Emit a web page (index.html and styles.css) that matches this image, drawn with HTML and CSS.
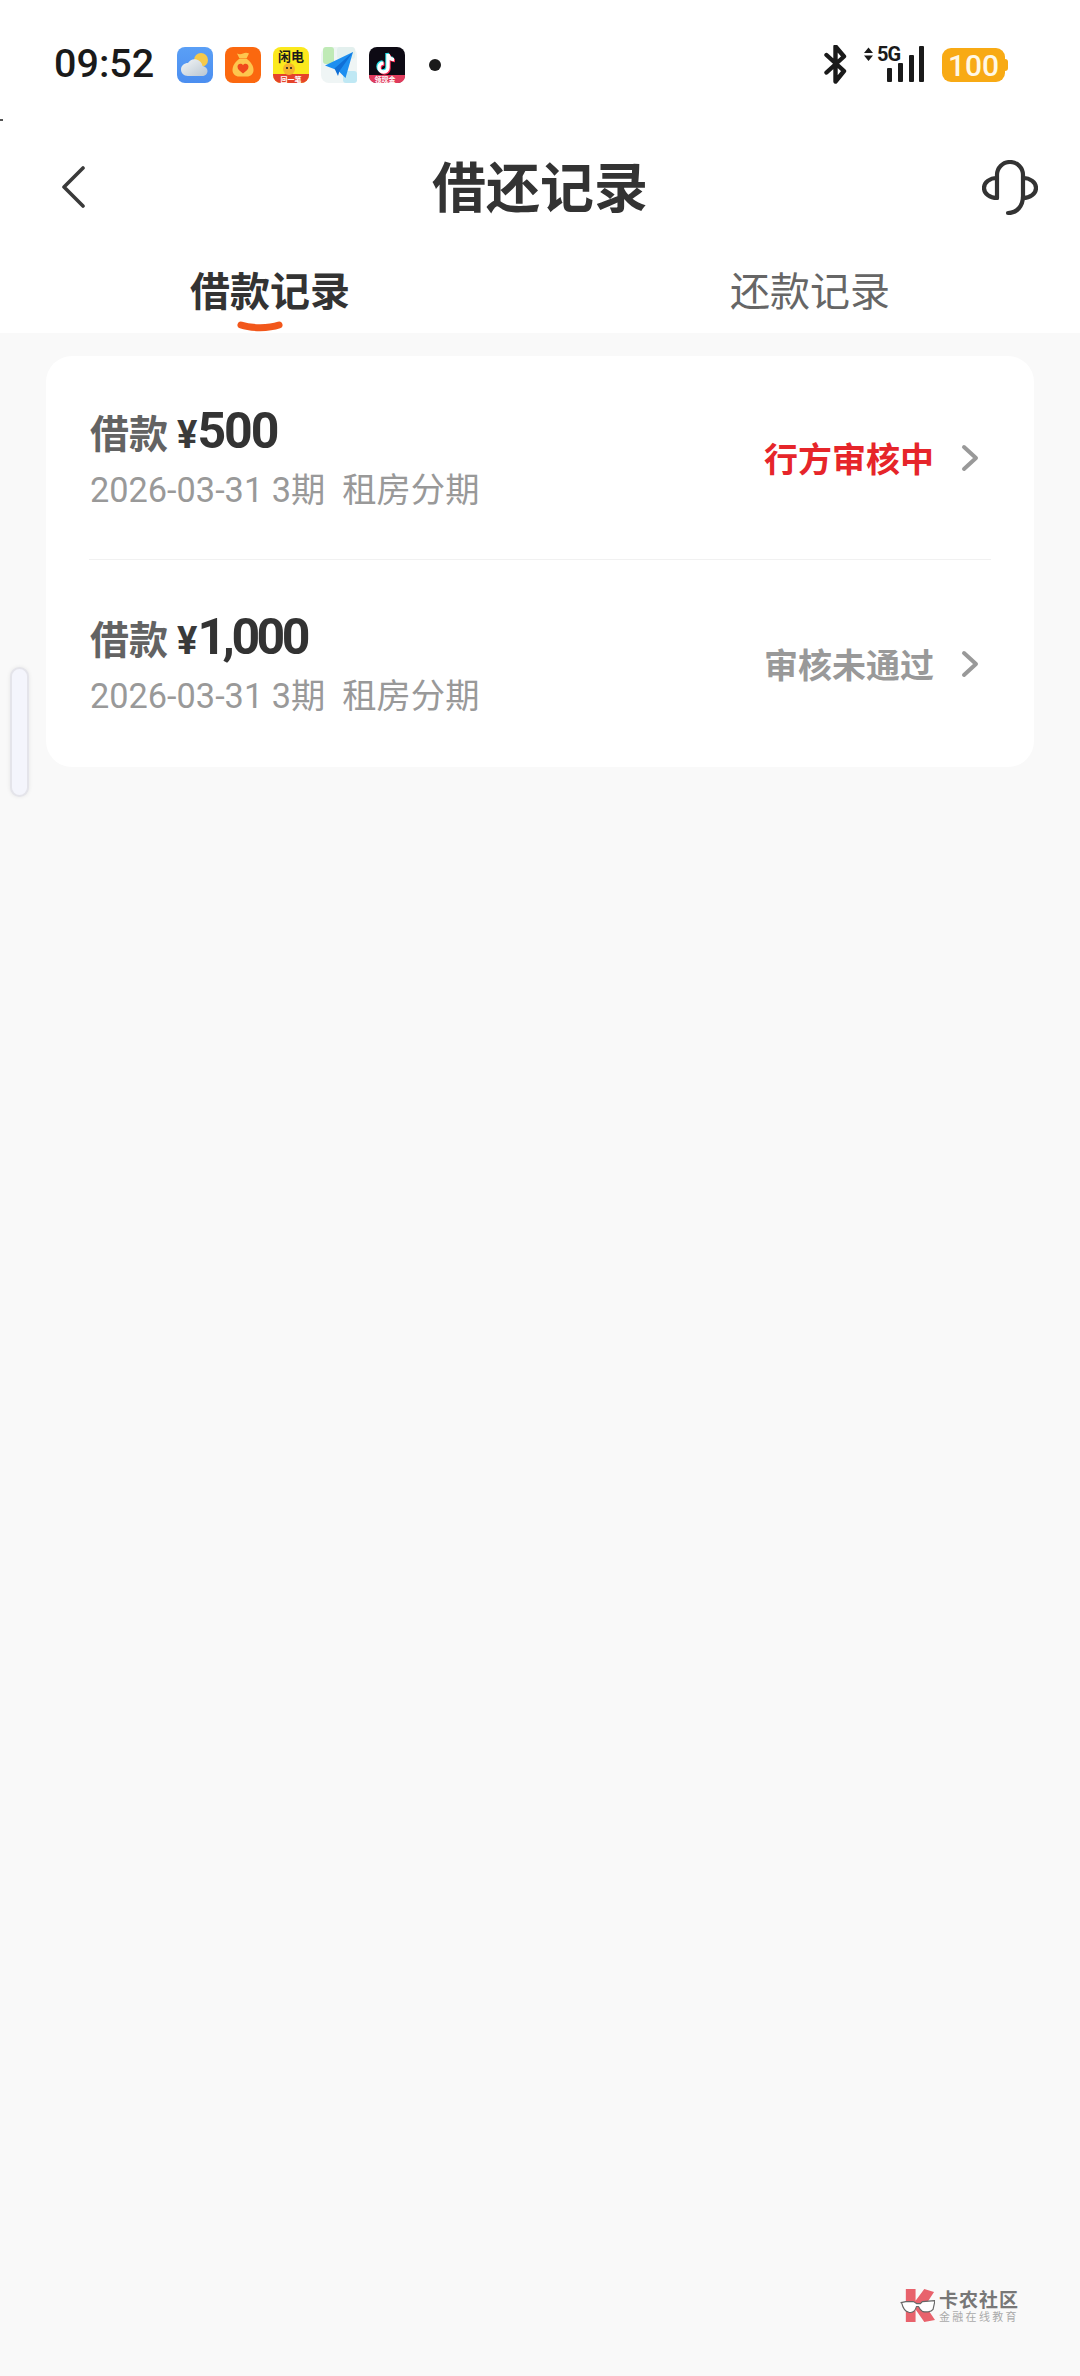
FILE: index.html
```html
<!DOCTYPE html>
<html lang="zh-CN">
<head>
  <meta charset="UTF-8">
  <meta name="viewport" content="width=device-width, initial-scale=1.0">
  <title>借还记录</title>
  <link rel="stylesheet" href="styles.css">
</head>
<body>
  <div class="header">
    <!-- 状态栏 -->
    <div class="status-bar">
      <span class="time">09:52</span>
      <div class="app-icons">
        <svg class="app-icon" viewBox="0 0 36 36">
          <defs>
            <linearGradient id="skyGrad" x1="0" y1="0" x2="0" y2="1"><stop offset="0" stop-color="#5a9ff6"/><stop offset="1" stop-color="#4b8ef0"/></linearGradient>
            <linearGradient id="cloudGrad" x1="0" y1="0" x2="1" y2="1"><stop offset="0" stop-color="#f4f6f6"/><stop offset="1" stop-color="#b9c6d2"/></linearGradient>
          </defs>
          <rect width="36" height="36" rx="8" fill="url(#skyGrad)"/>
          <circle cx="24" cy="13" r="7" fill="#f5c94a"/>
          <path d="M11 29c-4.500 0-7-3-7-6.500 0-4 3.500-6.500 7-6.500 2-3.500 5.500-4.500 8.500-3.500 3.500 1 5.500 3.500 6 6.500 3 .5 5 2.500 5 5 0 3-2.500 5-5.500 5z" fill="url(#cloudGrad)"/>
        </svg>
        <svg class="app-icon" viewBox="0 0 36 36">
          <rect width="36" height="36" rx="8" fill="#fb680f"/>
          <path d="M12 6.500c2 1 4 1 6 0s4-1 6 0l-2.500 5h-7z" fill="#fdc64e"/>
          <path d="M14 12h8c4 3 6.500 7 6.500 11 0 4-3 6.500-6.500 6.500h-8C10.500 29.500 7.500 27 7.500 23c0-4 2.500-8 6.500-11z" fill="#fdc64e"/>
          <path d="M18 26.500c-3-2.200-5.500-4-5.500-6.700 0-3.300 4-4 5.500-1.500 1.500-2.500 5.500-1.800 5.500 1.500 0 2.700-2.500 4.500-5.500 6.700z" fill="#f0491c"/>
        </svg>
        <svg class="app-icon" viewBox="0 0 36 36">
          <rect width="36" height="36" rx="8" fill="#fbe91d"/>
          <path d="M0 27h36v1a8 8 0 0 1-8 8H8a8 8 0 0 1-8-8z" fill="#e5432a"/>
          <circle cx="16" cy="22" r="6" fill="#f6b52e"/>
          <text class="app-text app-text-dark" x="18" y="14">闲电</text>
          <circle cx="14" cy="21" r="1.100" fill="#222"/>
          <circle cx="18" cy="21" r="1.100" fill="#222"/>
          <text class="app-text app-text-light" x="18" y="34.500">回一笔</text>
        </svg>
        <svg class="app-icon" viewBox="0 0 36 36">
          <rect width="36" height="36" rx="8" fill="#eff5f5"/>
          <rect x="2" y="0" width="11" height="17" rx="3" fill="#bfeab6"/>
          <rect x="16" y="0" width="18" height="12" rx="3" fill="#e3f0ee"/>
          <rect x="22" y="24" width="14" height="12" rx="3" fill="#bfe8f4"/>
          <path d="M4 18.500 32 5 24.500 31 17 23.500z" fill="#1d8ff0"/>
          <path d="M32 5 13.500 21.500 17 29 18.500 24z" fill="#0f6fd6"/>
        </svg>
        <svg class="app-icon" viewBox="0 0 36 36">
          <rect width="36" height="36" rx="8" fill="#0d0a14"/>
          <path d="M0 28h36v1a7 7 0 0 1-7 7H7a7 7 0 0 1-7-7z" fill="#e13a5c"/>
          <path class="note note-cyan" d="M18 6v13.500a4.500 4.500 0 1 1-4.500-4.500M18 6c.5 3.500 3 5.500 6 5.500"/>
          <path class="note note-red" d="M20 8v13.500a4.500 4.500 0 1 1-4.500-4.500M20 8c.5 3.500 3 5.500 6 5.500"/>
          <path class="note note-white" d="M19 7v13.500a4.500 4.500 0 1 1-4.500-4.500M19 7c.5 3.500 3 5.500 6 5.500"/>
          <text class="app-text app-text-light" x="16" y="34.500">领现金</text>
        </svg>
      </div>
      <span class="notice-dot"></span>
      <div class="status-right">
        <svg class="bluetooth" viewBox="0 0 24 40">
          <path d="M2.500 10 20 26 11.500 36.500V1.500L20 11.500 2.500 27.500" fill="none" stroke="#1a1a1a" stroke-width="4.400" stroke-linecap="round" stroke-linejoin="round"/>
        </svg>
        <svg class="signal" viewBox="0 -6 62 50">
          <path d="M1 7 5.500 1.500 10 7zM1 9.500 5.500 15 10 9.500z" fill="#1a1a1a"/>
          <text class="net-type" x="14" y="15">5G</text>
          <rect x="24" y="22" width="5" height="14" rx="1" fill="#1a1a1a"/>
          <rect x="35" y="17" width="5" height="19" rx="1" fill="#1a1a1a"/>
          <rect x="46" y="9" width="5" height="27" rx="1" fill="#1a1a1a"/>
          <rect x="56" y="0" width="5" height="36" rx="1" fill="#1a1a1a"/>
        </svg>
        <div class="battery"><span class="battery-level">100</span></div>
      </div>
    </div>

    <!-- 标题栏 -->
    <div class="nav-bar">
      <svg class="back-icon" viewBox="0 0 24 42">
        <path d="M22 2 3 21 22 40" fill="none" stroke="#3a3a3a" stroke-width="3.600" stroke-linecap="round" stroke-linejoin="round"/>
      </svg>
      <h1 class="page-title">借还记录</h1>
      <svg class="service-icon" viewBox="0 0 56 56">
        <path d="M15 38V15a13 13 0 0 1 26 0V36c0 10-6 17-15 17" fill="none" stroke="#333" stroke-width="4.200" stroke-linecap="round"/>
        <path d="M15 18a13 10 0 0 0 0 20M41 18a13 10 0 0 1 0 20" fill="none" stroke="#333" stroke-width="4.200" stroke-linecap="round"/>
      </svg>
    </div>

    <div class="tabs">
      <div class="tab tab-active">
        <span>借款记录</span>
        <svg class="tab-mark" viewBox="0 0 46 12">
          <path d="M4 4C14 7.500 32 7.500 42 4" fill="none" stroke="#f2571b" stroke-width="7" stroke-linecap="round"/>
        </svg>
      </div>
      <div class="tab"><span>还款记录</span></div>
    </div>
  </div>

  <div class="card">
    <div class="record">
      <div class="record-info">
        <div class="record-amount"><span class="amount-label">借款</span><span class="amount-sign">¥</span><span class="amount-value">500</span></div>
        <div class="record-meta">2026-03-31 3期&nbsp;&nbsp;租房分期</div>
      </div>
      <div class="record-status status-pending">行方审核中</div>
      <svg class="record-arrow" viewBox="0 0 18 28"><path d="M3 3 15 14 3 25" fill="none" stroke="#999" stroke-width="4" stroke-linecap="round" stroke-linejoin="round"/></svg>
    </div>
    <div class="record">
      <div class="record-info">
        <div class="record-amount"><span class="amount-label">借款</span><span class="amount-sign">¥</span><span class="amount-value amount-long">1,000</span></div>
        <div class="record-meta">2026-03-31 3期&nbsp;&nbsp;租房分期</div>
      </div>
      <div class="record-status">审核未通过</div>
      <svg class="record-arrow" viewBox="0 0 18 28"><path d="M3 3 15 14 3 25" fill="none" stroke="#999" stroke-width="4" stroke-linecap="round" stroke-linejoin="round"/></svg>
    </div>
  </div>

  <!-- 侧边悬浮条 -->
  <div class="side-handle"></div>
  <div class="corner-speck"></div>

  <!-- 水印 -->
  <div class="watermark">
    <svg class="watermark-logo" viewBox="0 0 36 36">
      <path d="M6 1h10v12L25 1l10 3-9 14 10 15-11 2-9-13v13H6z" fill="#e8626c"/>
      <path d="M1 15 6 14h8l3 2h4l2-2 13-1-2 9c-2 3-8 3-11 2-2-1-3-3-4-5h-2c-1 4-4 7-8 6-3-1-6-4-7-9z" fill="#fff" stroke="#666" stroke-width="1.200" stroke-linejoin="round"/>
    </svg>
    <div class="watermark-text">
      <div class="watermark-name">卡农社区</div>
      <div class="watermark-sub">金融在线教育</div>
    </div>
  </div>
</body>
</html>
```

FILE: styles.css
```css
body {
  margin: 0;
  height: 2376px;
  overflow: hidden;
  position: relative;
  background-color: #f9f9f9;
  font-family: Roboto, "Noto Sans CJK SC", sans-serif;
  color: #333;
}
.header {
  background-color: #fff;
}

/* status bar */
.status-bar {
  display: flex;
  align-items: center;
  height: 130px;
  padding: 0 75px 0 54px;
}
.time {
  font-size: 39.5px;
  font-weight: 500;
  color: #1a1a1a;
  width: 123px;
  margin-bottom: 4px;
}
.app-icons {
  display: flex;
  gap: 12px;
}
.app-icon {
  width: 36px;
  height: 36px;
  display: block;
}
.app-text {
  font-family: "Noto Sans CJK SC", sans-serif;
  font-weight: 700;
  text-anchor: middle;
}
.app-text-dark {
  font-size: 13px;
  fill: #1a1a1a;
}
.app-text-light {
  font-size: 7px;
  fill: #fff;
}
.note {
  fill: none;
  stroke-width: 3.4;
}
.note-cyan {
  stroke: #25e6ee;
}
.note-red {
  stroke: #fb2c55;
}
.note-white {
  stroke: #fff;
}
.notice-dot {
  width: 12px;
  height: 12px;
  border-radius: 50%;
  background-color: #1a1a1a;
  margin-left: 24px;
}
.status-right {
  margin-left: auto;
  display: flex;
  align-items: center;
}
.bluetooth {
  width: 24px;
  height: 40px;
  display: block;
}
.signal {
  width: 62px;
  height: 50px;
  display: block;
  margin-left: 15px;
}
.net-type {
  font-size: 20px;
  font-weight: 700;
  fill: #1a1a1a;
  letter-spacing: -1px;
}
.battery {
  position: relative;
  width: 63px;
  height: 34px;
  margin-left: 17px;
  border-radius: 9px;
  background-color: #f8aa14;
  display: flex;
  align-items: center;
  justify-content: center;
}
.battery::after {
  content: "";
  position: absolute;
  right: -3px;
  top: 11px;
  width: 3px;
  height: 12px;
  border-radius: 0 3px 3px 0;
  background-color: #f8aa14;
}
.battery-level {
  font-size: 30px;
  font-weight: 500;
  color: #fff8e6;
}

/* title */
.nav-bar {
  display: grid;
  grid-template-columns: 1fr auto 1fr;
  align-items: center;
  height: 114px;
  padding: 0 42px;
}
.back-icon {
  width: 24px;
  height: 42px;
  display: block;
  margin-left: 19px;
}
.page-title {
  margin: 0 0 4px;
  font-family: "Noto Sans CJK SC", sans-serif;
  font-size: 54px;
  font-weight: 700;
  color: #333;
  line-height: 1;
}
.service-icon {
  width: 56px;
  height: 56px;
  display: block;
  justify-self: end;
  margin-top: 2px;
}

/* tabs */
.tabs {
  display: flex;
  height: 89px;
}
.tab {
  flex: 1;
  display: flex;
  flex-direction: column;
  align-items: center;
  padding-top: 18px;
  font-family: "Noto Sans CJK SC", sans-serif;
  font-size: 40px;
  line-height: 54px;
  color: #666;
}
.tab-active {
  font-weight: 700;
  color: #333;
}
.tab-mark {
  width: 46px;
  height: 12px;
  display: block;
  margin: 5px 20px 0 0;
}

/* list */
.card {
  margin: 23px 46px 0;
  padding: 0 43px;
  background-color: #fff;
  border-radius: 26px;
}
.record {
  display: flex;
  align-items: center;
  height: 207px;
  box-sizing: border-box;
  padding: 0 12px 0 1px;
}
.record:first-child {
  height: 204px;
  border-bottom: 1px solid #f1f1f1;
}
.record-info {
  flex: 1;
  padding-bottom: 2px;
}
.record-amount {
  display: flex;
  align-items: baseline;
  line-height: 60px;
}
.amount-label {
  font-family: "Noto Sans CJK SC", sans-serif;
  font-size: 39px;
  font-weight: 700;
  color: #636363;
}
.amount-sign {
  font-size: 38px;
  font-weight: 700;
  color: #3a3a3a;
  margin-left: 9px;
}
.amount-value {
  font-size: 50px;
  font-weight: 700;
  letter-spacing: -2px;
  color: #333;
}
.amount-long {
  letter-spacing: -3.5px;
}
.record-meta {
  font-size: 34.3px;
  line-height: 44px;
  color: #999;
  margin-top: 2.500px;
}
.record-status {
  font-family: "Noto Sans CJK SC", sans-serif;
  font-size: 34px;
  font-weight: 700;
  color: #999;
}
.status-pending {
  color: #e6252a;
}
.record-arrow {
  width: 18px;
  height: 28px;
  display: block;
  margin-left: 27px;
}

/* overlays */
.side-handle {
  position: absolute;
  left: 10px;
  top: 667px;
  width: 19px;
  height: 130px;
  box-sizing: border-box;
  border: 2px solid #e4e4ea;
  border-radius: 10px;
  background-color: #f4f5fc;
  box-shadow: 0 0 4px rgba(0, 0, 0, 0.08);
}
.corner-speck {
  position: absolute;
  left: 0;
  top: 119px;
  width: 3px;
  height: 2px;
  background-color: #555;
}
.watermark {
  position: absolute;
  left: 900px;
  top: 2288px;
  display: flex;
  gap: 4px;
  align-items: center;
}
.watermark-logo {
  width: 35px;
  height: 35px;
  display: block;
}
.watermark-text {
  font-family: "Noto Sans CJK SC", sans-serif;
}
.watermark-name {
  font-size: 19px;
  font-weight: 700;
  line-height: 20px;
  color: #777;
  letter-spacing: 1px;
}
.watermark-sub {
  font-size: 11px;
  line-height: 14px;
  color: #aaa;
  letter-spacing: 2.300px;
}
```
